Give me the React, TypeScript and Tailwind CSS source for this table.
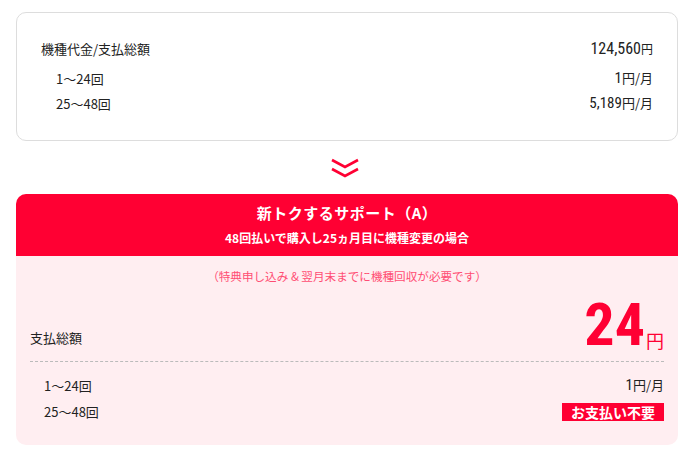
import React from 'react';

const jp = "font-['Noto_Sans_CJK_JP','Noto_Sans',sans-serif]";
const num = "font-['Roboto','Noto_Sans_CJK_JP',sans-serif] font-stretch-[75%]";

const Yen: React.FC<{ value: string; perMonth?: boolean }> = ({ value, perMonth }) => (
    <span className="text-[13px] text-[#222]">
        <span className={`${num} text-[15px]`}>{value}</span>
        <span className={jp}>円{perMonth ? '/月' : ''}</span>
    </span>
);

const App: React.FC = () => {
    return (
        <div className={`${jp} w-[690px] h-[451px] bg-white pt-3 text-[#222]`}>
            <div className="ml-4 w-[662px] border border-[#dddddd] rounded-[10px] pt-[25px] pb-[24px] pl-6 pr-6">
                <div className="flex justify-between items-center h-[22px]">
                    <span className="text-[13px]">機種代金/支払総額</span>
                    <span className="text-[13px]">
                        <span className={`${num} text-[16px]`}>124,560</span>
                        <span className="text-[12px]">円</span>
                    </span>
                </div>
                <div className="flex justify-between items-center h-[25px] mt-[6px] pl-[15px]">
                    <span className="text-[13px]">1〜24回</span>
                    <Yen value="1" perMonth />
                </div>
                <div className="flex justify-between items-center h-[25px] pl-[15px]">
                    <span className="text-[13px]">25〜48回</span>
                    <Yen value="5,189" perMonth />
                </div>
            </div>

            <div className="flex justify-center h-[53px] items-center pt-[3px]">
                <svg width="30" height="22" viewBox="0 0 30 22" fill="none" stroke="#ff0033" strokeWidth="2.6">
                    <path d="M2 2 L15 9 L28 2" />
                    <path d="M2 11 L15 18 L28 11" />
                </svg>
            </div>

            <div className="ml-4 w-[662px] rounded-[10px] overflow-hidden bg-[#ffeef1]">
                <div className="bg-[#ff0033] h-[62px] flex flex-col items-center text-white font-bold">
                    <div className="text-[15px] mt-[8px] leading-[22px] tracking-[0.5px]">新トクするサポート（A）</div>
                    <div className="text-[12px] mt-[5px] leading-[18px]">48回払いで購入し25ヵ月目に機種変更の場合</div>
                </div>
                <div className="px-[14px] pb-[21px]">
                    <div className="text-center text-[11.6px] text-[#ff4d73] mt-[11px] leading-[18px]">（特典申し込み &amp; 翌月末までに機種回収が必要です）</div>
                    <div className="flex justify-between items-end h-[67px] pl-0">
                        <span className="text-[13px] mb-[5px]">支払総額</span>
                        <span className="text-[#ff0033] flex items-end">
                            <span className={`${num} font-bold text-[60px] leading-[54px]`}>24</span>
                            <span className="text-[18px] leading-[20px] ml-[1px] mb-[2px]">円</span>
                        </span>
                    </div>
                    <div className="border-t border-dashed border-[#bbbbbb] mt-[9px]"></div>
                    <div className="flex justify-between items-center h-[25px] mt-[11px] pl-[14px]">
                        <span className="text-[13px]">1〜24回</span>
                        <Yen value="1" perMonth />
                    </div>
                    <div className="flex justify-between items-center h-[25px] mt-[1px] pl-[14px]">
                        <span className="text-[13px]">25〜48回</span>
                        <span className="bg-[#ff0033] text-white font-bold text-[14px] leading-[18px] px-[9px]">お支払い不要</span>
                    </div>
                </div>
            </div>
        </div>
    );
};

export default App;
